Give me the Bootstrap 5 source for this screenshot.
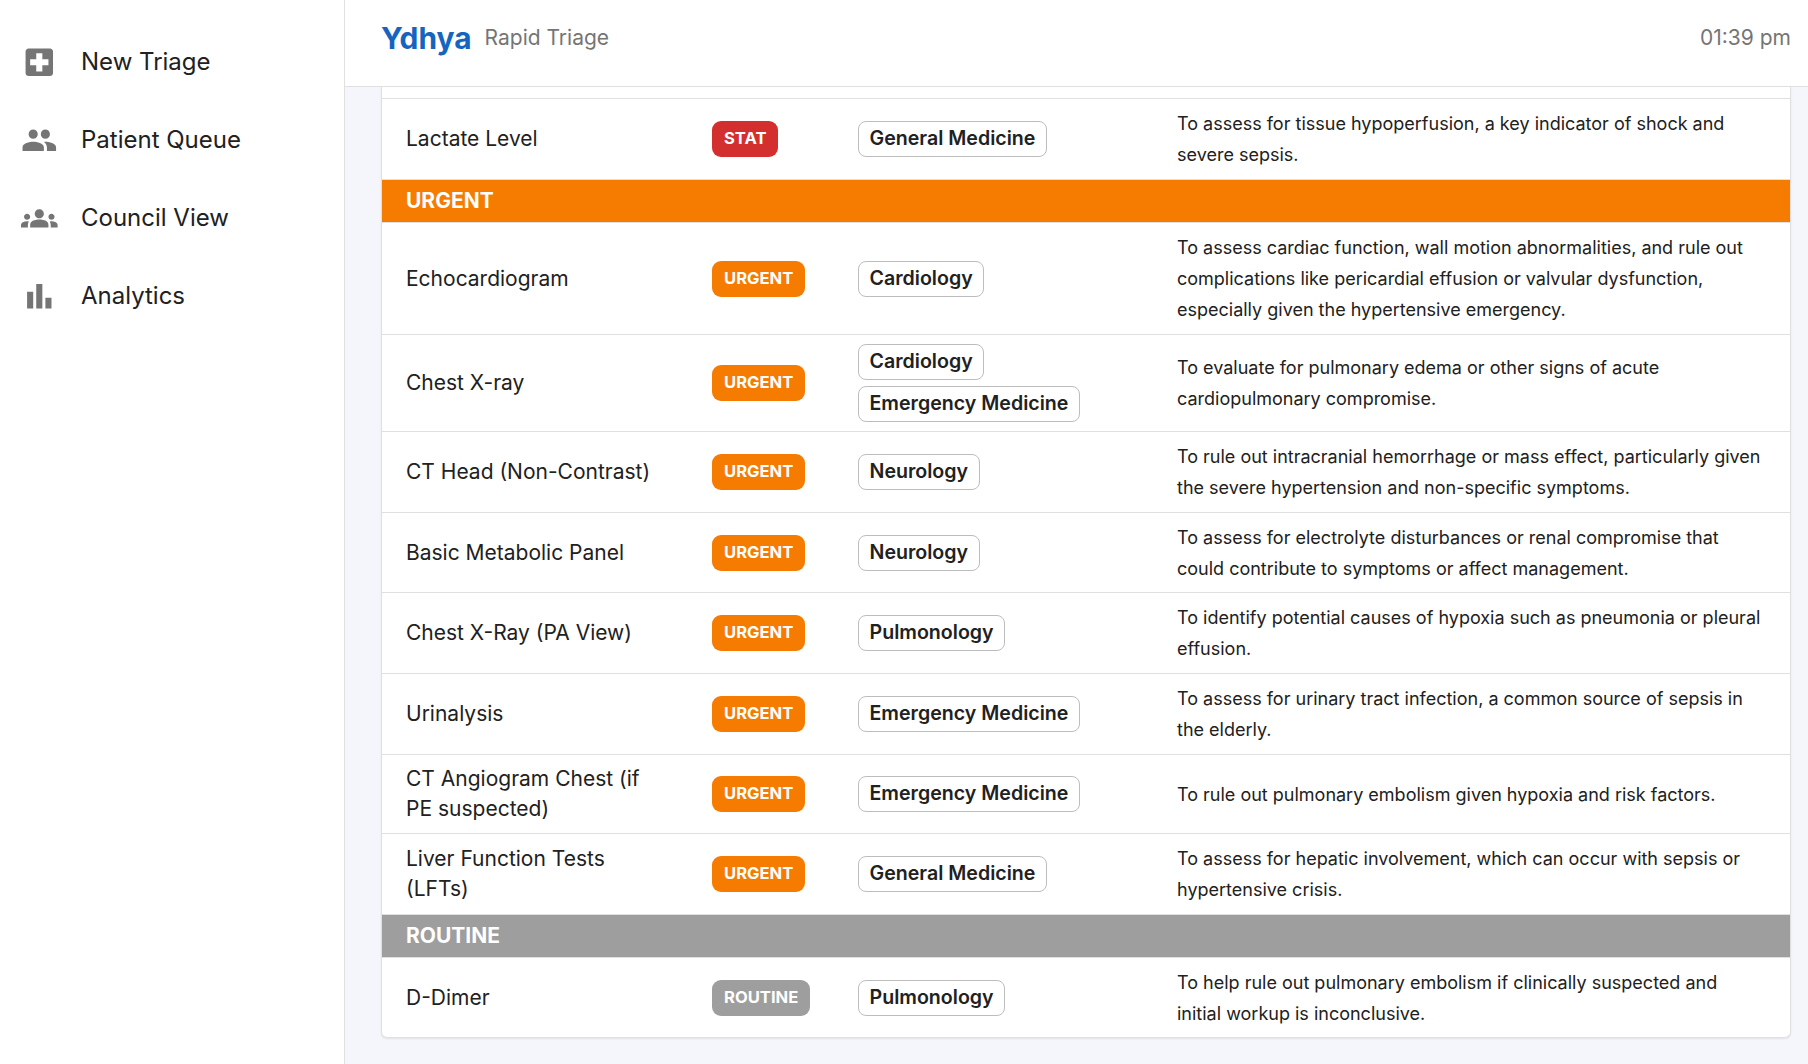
<!DOCTYPE html>
<html lang="en">
<head>
    <meta charset="UTF-8">
    <meta name="viewport" content="width=device-width, initial-scale=1.0">
    <title>Ydhya Rapid Triage</title>
    <link href="https://cdn.jsdelivr.net/npm/bootstrap@5.3.3/dist/css/bootstrap.min.css" rel="stylesheet">
    <style>
        html, body { height: 100%; }
        body { font-family: Inter, "Liberation Sans", sans-serif; color: #212121; background: #f4f6fb; overflow: hidden; }
        .app-shell { height: 100vh; }
        .side-rail { width: 345px; flex: none; background: #fff; border-right: 1px solid #e0e0e0; padding-top: 23px; }
        .rail-link { height: 78px; padding-left: 21px; gap: 23.4px; color: #212121; font-size: 24px; text-decoration: none; }
        .rail-link svg { width: 36.6px; height: 36.6px; fill: #757575; flex: none; }
        .main-pane { min-width: 0; }
        .top-bar { height: 87px; flex: none; background: #fff; border-bottom: 1px solid #e0e0e0; padding: 0 17px 10px 36px; }
        .brand-name { font-size: 29.9px; font-weight: 700; color: #1565c0; }
        .brand-sub { font-size: 21px; color: #757575; margin-left: 13px; }
        .clock-text { font-size: 21px; color: #757575; }
        .scroll-area { flex: 1; min-height: 0; overflow: hidden; padding: 0 17px 0 36px; }
        .triage-card { background: #fff; border: 1px solid #e0e0e0; border-top: 0; border-radius: 0 0 6px 6px; box-shadow: 0 1px 2px rgba(0,0,0,.08); }
        .triage-table { width: 100%; table-layout: fixed; border-collapse: separate; border-spacing: 0; margin: 0; }
        .triage-table td { padding: 0 24px; vertical-align: middle; border-bottom: 1px solid #e0e0e0; }
        .col-test { width: 306px; font-size: 21px; line-height: 30px; }
        .col-prio { width: 146px; }
        .col-team { width: 319px; }
        .triage-table td.col-why { font-size: 18px; line-height: 31px; padding-right: 28px; }
        .stub-row td { height: 12px; }
        .group-row td { height: 43px; color: #fff; font-size: 21px; font-weight: 700; }
        .group-urgent td { background: #f57c00; }
        .group-routine td { background: #9e9e9e; }
        .prio-pill { display: inline-block; padding: 0 12px; height: 36px; line-height: 35px; border-radius: 9px; color: #fff; font-size: 16.6px; font-weight: 700; }
        .prio-stat { background: #d32f2f; }
        .prio-urgent { background: #f57c00; }
        .prio-routine { background: #9e9e9e; }
        .team-chip { display: block; width: fit-content; height: 36px; line-height: 33px; padding: 0 10.5px; border: 1px solid #bdbdbd; border-radius: 8px; font-size: 19.6px; font-weight: 600; }
        .team-chip + .team-chip { margin-top: 6px; }
        .h-112 td { height: 112px; }
        .h-97 td { height: 97px; }
        .h-81 td { height: 81px; }
        .h-80 td { height: 80px; }
        .h-79 td { height: 79px; }
        .last-row td { border-bottom: 0; }
    </style>
</head>
<body>
    <div class="app-shell d-flex">
        <nav class="side-rail d-flex flex-column">
            <a class="rail-link d-flex align-items-center" href="#">
                <svg viewBox="0 0 24 24"><path d="M19 3H5c-1.1 0-1.99.9-1.99 2L3 19c0 1.1.9 2 2 2h14c1.1 0 2-.9 2-2V5c0-1.1-.9-2-2-2zm-1 11h-4v4h-4v-4H6v-4h4V6h4v4h4v4z"/></svg>
                <span>New Triage</span>
            </a>
            <a class="rail-link d-flex align-items-center" href="#">
                <svg viewBox="0 0 24 24"><path d="M16 11c1.66 0 2.99-1.34 2.99-3S17.66 5 16 5c-1.66 0-3 1.34-3 3s1.34 3 3 3zm-8 0c1.66 0 2.99-1.34 2.99-3S9.66 5 8 5C6.34 5 5 6.34 5 8s1.34 3 3 3zm0 2c-2.33 0-7 1.17-7 3.5V19h14v-2.5c0-2.33-4.67-3.5-7-3.5zm8 0c-.29 0-.62.02-.97.05 1.16.84 1.97 1.97 1.97 3.45V19h6v-2.5c0-2.33-4.67-3.5-7-3.5z"/></svg>
                <span>Patient Queue</span>
            </a>
            <a class="rail-link d-flex align-items-center" href="#">
                <svg viewBox="0 0 24 24"><path d="M12 12.75c1.63 0 3.07.39 4.24.9 1.08.48 1.76 1.56 1.76 2.73V18H6v-1.61c0-1.18.68-2.26 1.76-2.73 1.17-.52 2.61-.91 4.24-.91zM4 13c1.1 0 2-.9 2-2s-.9-2-2-2-2 .9-2 2 .9 2 2 2zm1.13 1.1C4.76 14.04 4.39 14 4 14c-.99 0-1.93.21-2.78.58C.48 14.9 0 15.62 0 16.43V18h4.5v-1.61c0-.83.23-1.61.63-2.29zM20 13c1.1 0 2-.9 2-2s-.9-2-2-2-2 .9-2 2 .9 2 2 2zm4 3.43c0-.81-.48-1.53-1.22-1.85-.85-.37-1.79-.58-2.78-.58-.39 0-.76.04-1.13.1.4.68.63 1.46.63 2.29V18H24v-1.57zM12 6c1.66 0 3 1.34 3 3s-1.34 3-3 3-3-1.34-3-3 1.34-3 3-3z"/></svg>
                <span>Council View</span>
            </a>
            <a class="rail-link d-flex align-items-center" href="#">
                <svg viewBox="0 0 24 24"><path d="M4 9h4v11H4zm12 4h4v7h-4zm-6-9h4v16h-4z"/></svg>
                <span>Analytics</span>
            </a>
        </nav>
        <div class="main-pane d-flex flex-column flex-grow-1">
            <header class="top-bar d-flex align-items-center justify-content-between">
                <div class="d-flex align-items-center">
                    <span class="brand-name">Ydhya</span>
                    <span class="brand-sub">Rapid Triage</span>
                </div>
                <span class="clock-text">01:39 pm</span>
            </header>
            <main class="scroll-area">
                <div class="triage-card">
                    <table class="triage-table">
                        <colgroup><col class="col-test"><col class="col-prio"><col class="col-team"><col></colgroup>
                        <tbody>
                            <tr class="stub-row"><td colspan="4"></td></tr>
                            <tr class="h-81"><td class="col-test">Lactate Level</td><td><span class="prio-pill prio-stat">STAT</span></td><td><span class="team-chip">General Medicine</span></td><td class="col-why">To assess for tissue hypoperfusion, a key indicator of shock and severe sepsis.</td></tr>
                            <tr class="group-row group-urgent"><td colspan="4">URGENT</td></tr>
                            <tr class="h-112"><td class="col-test">Echocardiogram</td><td><span class="prio-pill prio-urgent">URGENT</span></td><td><span class="team-chip">Cardiology</span></td><td class="col-why">To assess cardiac function, wall motion abnormalities, and rule out complications like pericardial effusion or valvular dysfunction, especially given the hypertensive emergency.</td></tr>
                            <tr class="h-97"><td class="col-test">Chest X-ray</td><td><span class="prio-pill prio-urgent">URGENT</span></td><td><span class="team-chip">Cardiology</span><span class="team-chip">Emergency Medicine</span></td><td class="col-why">To evaluate for pulmonary edema or other signs of acute cardiopulmonary compromise.</td></tr>
                            <tr class="h-81"><td class="col-test">CT Head (Non-Contrast)</td><td><span class="prio-pill prio-urgent">URGENT</span></td><td><span class="team-chip">Neurology</span></td><td class="col-why">To rule out intracranial hemorrhage or mass effect, particularly given the severe hypertension and non-specific symptoms.</td></tr>
                            <tr class="h-80"><td class="col-test">Basic Metabolic Panel</td><td><span class="prio-pill prio-urgent">URGENT</span></td><td><span class="team-chip">Neurology</span></td><td class="col-why">To assess for electrolyte disturbances or renal compromise that could contribute to symptoms or affect management.</td></tr>
                            <tr class="h-81"><td class="col-test">Chest X-Ray (PA View)</td><td><span class="prio-pill prio-urgent">URGENT</span></td><td><span class="team-chip">Pulmonology</span></td><td class="col-why">To identify potential causes of hypoxia such as pneumonia or pleural effusion.</td></tr>
                            <tr class="h-81"><td class="col-test">Urinalysis</td><td><span class="prio-pill prio-urgent">URGENT</span></td><td><span class="team-chip">Emergency Medicine</span></td><td class="col-why">To assess for urinary tract infection, a common source of sepsis in the elderly.</td></tr>
                            <tr class="h-79"><td class="col-test">CT Angiogram Chest (if PE suspected)</td><td><span class="prio-pill prio-urgent">URGENT</span></td><td><span class="team-chip">Emergency Medicine</span></td><td class="col-why">To rule out pulmonary embolism given hypoxia and risk factors.</td></tr>
                            <tr class="h-81"><td class="col-test">Liver Function Tests (LFTs)</td><td><span class="prio-pill prio-urgent">URGENT</span></td><td><span class="team-chip">General Medicine</span></td><td class="col-why">To assess for hepatic involvement, which can occur with sepsis or hypertensive crisis.</td></tr>
                            <tr class="group-row group-routine"><td colspan="4">ROUTINE</td></tr>
                            <tr class="h-79 last-row"><td class="col-test">D-Dimer</td><td><span class="prio-pill prio-routine">ROUTINE</span></td><td><span class="team-chip">Pulmonology</span></td><td class="col-why">To help rule out pulmonary embolism if clinically suspected and initial workup is inconclusive.</td></tr>
                        </tbody>
                    </table>
                </div>
            </main>
        </div>
    </div>
    <script src="https://cdn.jsdelivr.net/npm/bootstrap@5.3.3/dist/js/bootstrap.bundle.min.js"></script>
</body>
</html>
